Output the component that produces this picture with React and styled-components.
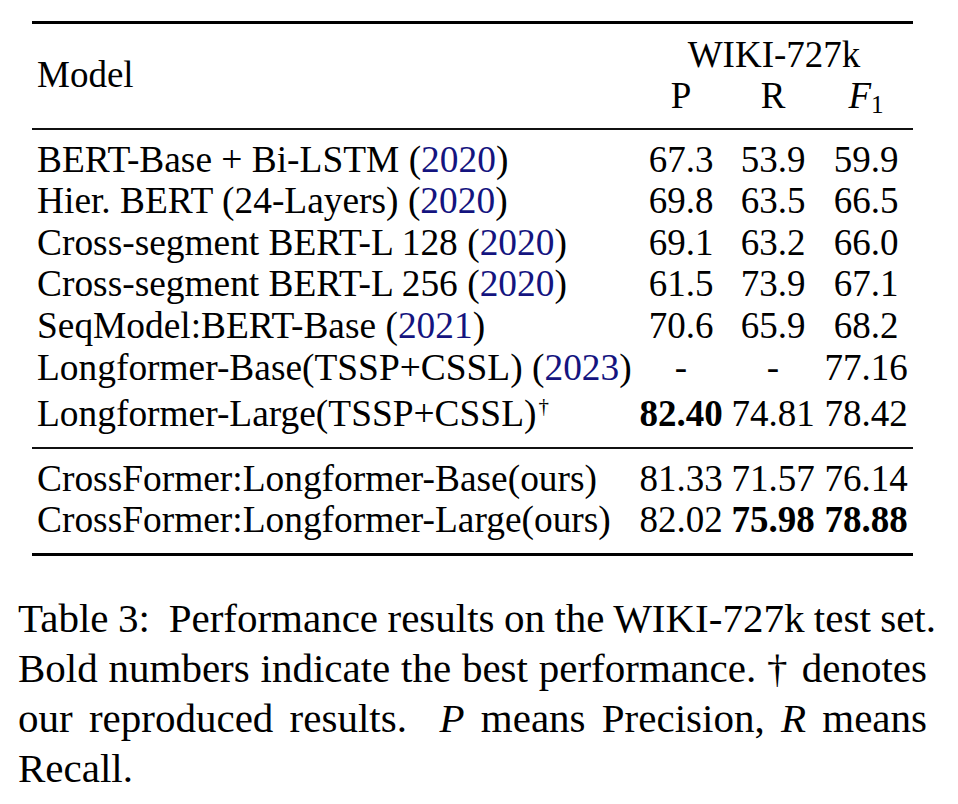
import React from 'react';
import styled, { createGlobalStyle } from 'styled-components';

const GlobalStyle = createGlobalStyle`
  html, body {
    margin: 0;
    padding: 0;
    background: #fff;
  }
  body {
    font-family: "Liberation Serif", "Times New Roman", serif;
    color: #000;
  }
`;

const COLS = '603px 92px 92px 94px';

const baseline = [
  { model: 'BERT-Base + Bi-LSTM', year: '2020', p: '67.3', r: '53.9', f: '59.9' },
  { model: 'Hier. BERT (24-Layers)', year: '2020', p: '69.8', r: '63.5', f: '66.5' },
  { model: 'Cross-segment BERT-L 128', year: '2020', p: '69.1', r: '63.2', f: '66.0' },
  { model: 'Cross-segment BERT-L 256', year: '2020', p: '61.5', r: '73.9', f: '67.1' },
  { model: 'SeqModel:BERT-Base', year: '2021', p: '70.6', r: '65.9', f: '68.2' },
  { model: 'Longformer-Base(TSSP+CSSL)', year: '2023', p: '-', r: '-', f: '77.16' },
  { model: 'Longformer-Large(TSSP+CSSL)', dagger: true, p: '82.40', r: '74.81', f: '78.42', bold: ['p'] },
];

const ours = [
  { model: 'CrossFormer:Longformer-Base(ours)', p: '81.33', r: '71.57', f: '76.14' },
  { model: 'CrossFormer:Longformer-Large(ours)', p: '82.02', r: '75.98', f: '78.88', bold: ['r', 'f'] },
];

const Page = styled.div`
  padding-top: 21px;
  width: 958px;
`;

const Table = styled.div`
  margin-left: 32px;
  width: 881px;
  border-top: 3px solid #000;
  border-bottom: 3px solid #000;
  font-size: 37px;
  line-height: 41.6px;
`;

const Head = styled.div`
  display: grid;
  grid-template-columns: ${COLS};
  grid-template-rows: 41.6px 41.6px;
  padding: 9.7px 0 11.1px;
  border-bottom: 2px solid #111;
`;

const ModelHead = styled.div`
  grid-row: 1 / 3;
  align-self: center;
  padding-left: 5px;
`;

const GroupHead = styled.div`
  grid-column: 2 / 5;
  text-align: center;
`;

const ColHead = styled.div`
  text-align: center;
`;

const Italic = styled.i`
  font-style: italic;
`;

const Sub = styled.sub`
  font-style: normal;
  font-size: 0.68em;
  line-height: 0;
  vertical-align: -0.18em;
`;

const Section = styled.div`
  padding: 8.7px 0 12.1px;
  border-bottom: ${p => (p.$rule ? '2px solid #111' : 'none')};
`;

const Row = styled.div`
  display: grid;
  grid-template-columns: ${COLS};
  padding-top: ${p => (p.$tall ? '5px' : '0')};
`;

const ModelCell = styled.div`
  padding-left: 5px;
  white-space: nowrap;
  font-size: 37.4px;
`;

const Cite = styled.span`
  color: #14147f;
`;

const Dagger = styled.sup`
  font-size: 0.56em;
  line-height: 0;
  vertical-align: 0.62em;
  margin-left: 2px;
`;

const NumCell = styled.div`
  text-align: center;
  white-space: nowrap;
  font-weight: ${p => (p.$bold ? 700 : 400)};
`;

const Caption = styled.div`
  margin: 37.2px 0 0 18px;
  width: 909px;
  font-size: 41px;
  line-height: 50px;
`;

const CaptionLine = styled.div`
  white-space: nowrap;
  word-spacing: -3px;
  text-align: ${p => (p.$last ? 'left' : 'justify')};
  text-align-last: ${p => (p.$last ? 'left' : 'justify')};
  margin-right: ${p => (p.$protrude ? '-9px' : '0')};
`;

const ResultRow = ({ row }) => {
  const bold = row.bold || [];
  return (
    <Row $tall={row.dagger}>
      <ModelCell>
        {row.model}
        {row.year && (
          <>
            {' '}(<Cite>{row.year}</Cite>)
          </>
        )}
        {row.dagger && <Dagger>†</Dagger>}
      </ModelCell>
      <NumCell $bold={bold.includes('p')}>{row.p}</NumCell>
      <NumCell $bold={bold.includes('r')}>{row.r}</NumCell>
      <NumCell $bold={bold.includes('f')}>{row.f}</NumCell>
    </Row>
  );
};

export default function App() {
  return (
    <Page>
      <GlobalStyle />
      <Table>
        <Head>
          <ModelHead>Model</ModelHead>
          <GroupHead>WIKI-727k</GroupHead>
          <ColHead>P</ColHead>
          <ColHead>R</ColHead>
          <ColHead>
            <Italic>F</Italic>
            <Sub>1</Sub>
          </ColHead>
        </Head>
        <Section $rule>
          {baseline.map(r => (
            <ResultRow key={r.model} row={r} />
          ))}
        </Section>
        <Section>
          {ours.map(r => (
            <ResultRow key={r.model} row={r} />
          ))}
        </Section>
      </Table>
      <Caption>
        <CaptionLine $protrude>Table 3:{'\u00a0'} Performance results on the WIKI-727k test set.</CaptionLine>
        <CaptionLine>Bold numbers indicate the best performance. † denotes</CaptionLine>
        <CaptionLine>
          our reproduced results.{'\u00a0'} <Italic>P</Italic> means Precision, <Italic>R</Italic> means
        </CaptionLine>
        <CaptionLine $last>Recall.</CaptionLine>
      </Caption>
    </Page>
  );
}
